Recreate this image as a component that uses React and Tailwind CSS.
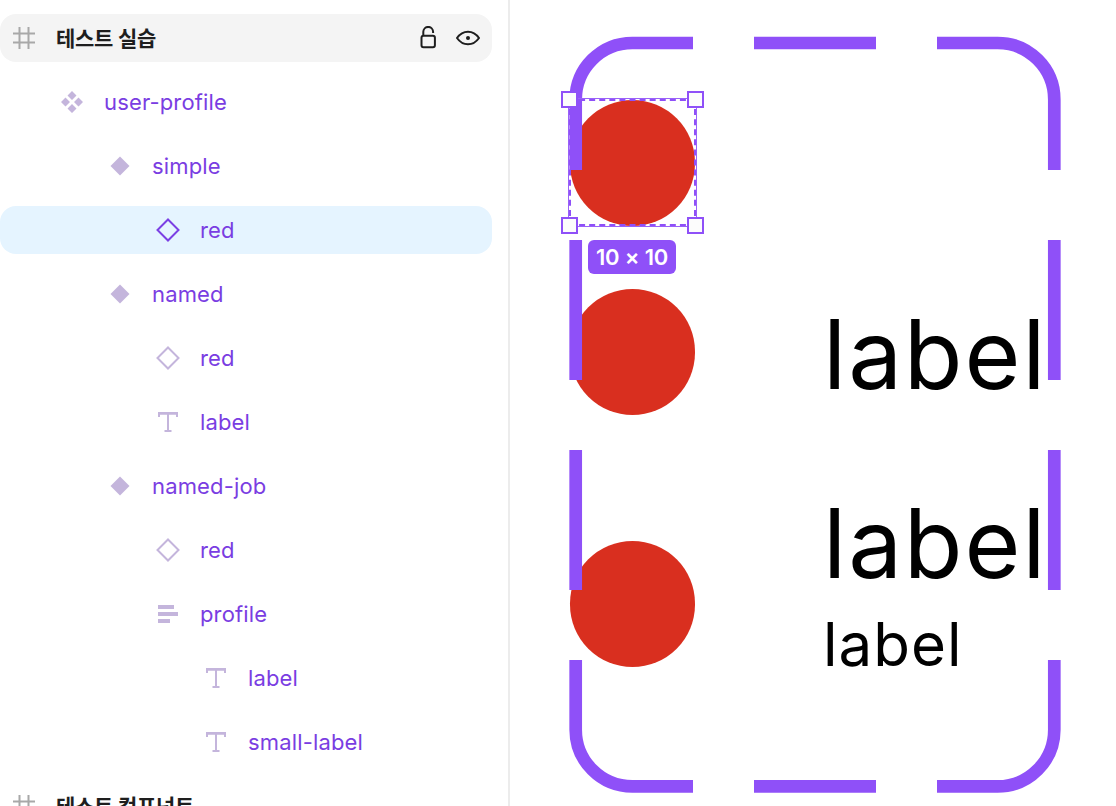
import React from 'react';

const rows = [
  { name: '테스트 실습', depth: 0, icon: 'frame', kind: 'header' },
  { name: 'user-profile', depth: 1, icon: 'components' },
  { name: 'simple', depth: 2, icon: 'component' },
  { name: 'red', depth: 3, icon: 'instance', kind: 'selected' },
  { name: 'named', depth: 2, icon: 'component' },
  { name: 'red', depth: 3, icon: 'instance' },
  { name: 'label', depth: 3, icon: 'text' },
  { name: 'named-job', depth: 2, icon: 'component' },
  { name: 'red', depth: 3, icon: 'instance' },
  { name: 'profile', depth: 3, icon: 'stack' },
  { name: 'label', depth: 4, icon: 'text' },
  { name: 'small-label', depth: 4, icon: 'text' },
  { name: '테스트 컴포넌트', depth: 0, icon: 'frame', kind: 'title' },
];

const indent = ['pl-3', 'pl-[60px]', 'pl-[108px]', 'pl-[156px]', 'pl-[204px]'];

const LayerIcon = ({ type, active }) => {
  const tint = active ? '#7b3fe4' : '#c4b5dc';
  return (
    <svg width="24" height="24" viewBox="0 0 24 24" className="shrink-0">
      {type === 'frame' && (
        <path d="M7.500 1v22M16.500 1v22M1 7.500h22M1 16.500h22" stroke="#a8a8a8" strokeWidth="2" fill="none" />
      )}
      {type === 'components' && (
        <path
          d="M12 1l4.500 4.500-4.500 4.500-4.500-4.500zM12 14l4.500 4.500-4.500 4.500-4.500-4.500zM5.500 7.500l4.500 4.500-4.500 4.500L1 12zM18.500 7.500L23 12l-4.500 4.500-4.500-4.500z"
          fill={tint}
        />
      )}
      {type === 'component' && <path d="M12 2.500l9.500 9.500-9.500 9.500L2.500 12z" fill={tint} />}
      {type === 'instance' && <path d="M12 1.500L22.500 12 12 22.500 1.500 12z" stroke={tint} strokeWidth="2" fill="none" />}
      {type === 'text' && (
        <path d="M3 7V3h18v4M3 3.800h18M12 3v18M8.500 21h7" stroke={tint} strokeWidth="2" fill="none" />
      )}
      {type === 'stack' && <path d="M2 3h16v4H2zM2 10h20v4H2zM2 17h12v4H2z" fill={tint} />}
    </svg>
  );
};

const LayerRow = ({ row }) => {
  const isHeader = row.kind === 'header';
  const isTitle = row.kind === 'title' || isHeader;
  const isSelected = row.kind === 'selected';
  return (
    <div
      className={`flex h-12 shrink-0 items-center rounded-2xl ${indent[row.depth]} ${
        isHeader ? 'bg-[#f4f4f4]' : isSelected ? 'bg-[#e5f4ff]' : ''
      }`}
    >
      <LayerIcon type={row.icon} active={isSelected} />
      <span
        className={`ml-5 leading-none ${
          isTitle
            ? 'text-[21px] tracking-[-0.3px] font-semibold text-[#1e1e1e]'
            : 'text-[22px] tracking-[0.15px] text-[#7a3de2]'
        }`}
      >
        {row.name}
      </span>
      {isHeader && (
        <div className="ml-auto mr-3 flex items-center gap-4">
          <svg width="24" height="24" viewBox="0 0 24 24" fill="none" stroke="#1e1e1e" strokeWidth="2">
            <rect x="5.500" y="9.700" width="13.400" height="11.500" rx="2" />
            <path d="M7.300 9.700V5.800a4.900 4.900 0 0 1 9.800 0V7" />
          </svg>
          <svg width="24" height="24" viewBox="0 0 24 24" fill="none" stroke="#1e1e1e" strokeWidth="2">
            <path d="M1 12C3.800 8 7.600 5.700 12 5.700S20.200 8 23 12c-2.800 4-6.600 6.300-11 6.300S3.800 16 1 12z" />
            <circle cx="12" cy="12" r="2" fill="#1e1e1e" stroke="none" />
          </svg>
        </div>
      )}
    </div>
  );
};

const Dot = ({ className = '' }) => (
  <div className={`h-[126px] w-[125.400px] shrink-0 rounded-full bg-[#d92f1f] ${className}`} />
);

const Handle = ({ className }) => (
  <div className={`absolute h-[17px] w-[17px] border-2 border-[#8f50f8] bg-[#fcfcfc] ${className}`} />
);

export default function App() {
  return (
    <div
      className="flex h-[806px] w-[1116px] overflow-hidden bg-white"
      style={{ fontFamily: 'Inter, "Noto Sans CJK KR", sans-serif' }}
    >
      <aside className="flex w-[510px] shrink-0 flex-col gap-4 border-r-2 border-[#ececec] pt-[14px] pr-4">
        {rows.map((row, i) => (
          <LayerRow key={i} row={row} />
        ))}
      </aside>

      <main className="relative flex-1">
        <div className="flex flex-col pl-[59.700px] pt-[100px]">
          <Dot />
          <div className="mt-[63px] flex gap-[128px]">
            <Dot />
            <span className="mt-[7px] text-[96px] leading-[116px] tracking-[1.8px] text-black">label</span>
          </div>
          <div className="mt-[70px] flex gap-[128px]">
            <Dot className="mt-[56px]" />
            <div className="flex flex-col gap-[7px]">
              <span className="text-[96px] leading-[116px] tracking-[1.8px] text-black">label</span>
              <span className="text-[60px] leading-[73px] tracking-[1px] text-black">label</span>
            </div>
          </div>
        </div>

        {/* frame with dashed stroke, it runs over the circles */}
        <svg className="absolute left-0 top-0" width="606" height="806" fill="none" stroke="#8f50f8" strokeWidth="12.700">
          <path d="M183 43H122.400a56.700 56.700 0 0 0-56.700 56.700V170" />
          <path d="M244 43H366" />
          <path d="M427 43H487.600a56.700 56.700 0 0 1 56.700 56.700V170" />
          <path d="M65.700 240V380" />
          <path d="M544.300 240V380" />
          <path d="M65.700 450V590" />
          <path d="M544.300 450V590" />
          <path d="M65.700 660V729.700a56.700 56.700 0 0 0 56.700 56.700H183" />
          <path d="M244 786.400H366" />
          <path d="M427 786.400H487.600a56.700 56.700 0 0 0 56.700-56.700V660" />
        </svg>

        {/* selection box over the first circle */}
        <div className="absolute left-[58px] top-[98px] h-[129px] w-[129px] border border-[#9a62f9]">
          <div className="h-full w-full border-2 border-dashed border-[#8f50f8]" />
        </div>
        <Handle className="left-[51px] top-[91px]" />
        <Handle className="left-[177px] top-[91px]" />
        <Handle className="left-[51px] top-[217px]" />
        <Handle className="left-[177px] top-[217px]" />
        <div className="absolute left-[78px] top-[240px] flex h-[34px] w-[88px] items-center justify-center rounded-md bg-[#8f50f8] text-[22px] font-semibold tracking-[-0.2px] text-white">
          10 × 10
        </div>
      </main>
    </div>
  );
}
